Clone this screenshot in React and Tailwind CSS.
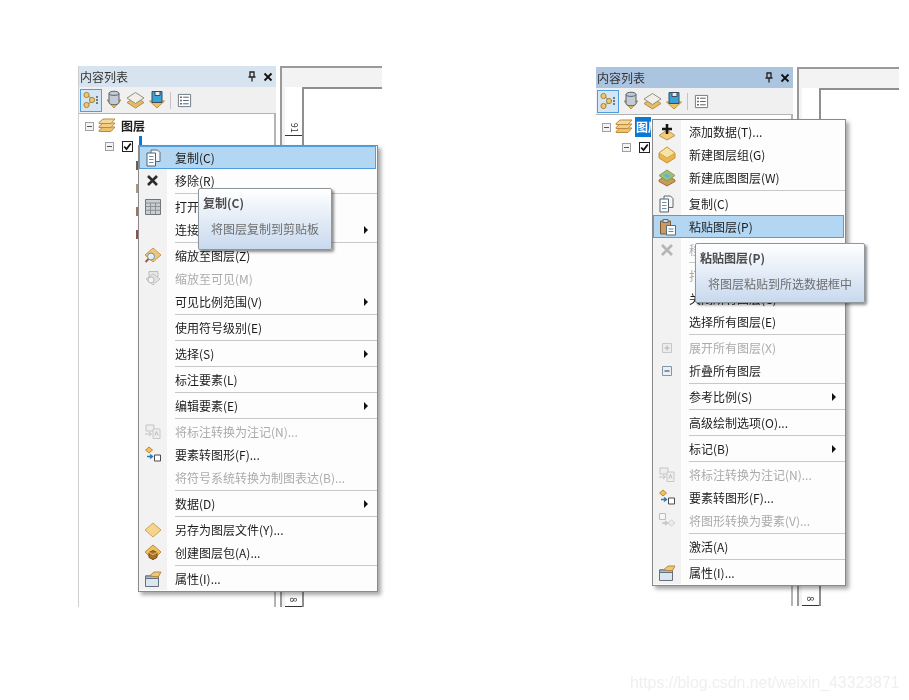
const Svg = ({ children, size = 18 }) => (
  <svg width={size} height={size} viewBox="0 0 18 18" fill="none">
    {children}
  </svg>
)

const icons = {
  copy: (
    <Svg>
      <path d="M6 1h6.500L15 3.500V12.500H6z" fill="#f4f6f8" stroke="#5f6a74" />
      <path d="M2 4h8.500V17H2z" fill="#fff" stroke="#56616b" />
      <path d="M4 7.500h4.500M4 10.500h4.500M4 13.500h4.500" stroke="#6f8da8" />
    </Svg>
  ),
  remove: (
    <Svg>
      <path d="M4 4l9 9M13 4l-9 9" stroke="#2b2b2b" strokeWidth="2.600" />
    </Svg>
  ),
  removeOff: (
    <Svg>
      <path d="M4 4l10 10M14 4l-10 10" stroke="#b5b5b5" strokeWidth="2.600" />
    </Svg>
  ),
  table: (
    <Svg>
      <path d="M1.500 1.500h15v15h-15z" fill="#c9ced3" stroke="#6d747a" />
      <path d="M1.500 5h15M6.500 5v11.500M11.500 5v11.500M1.500 8.500h15M1.500 12.300h15" stroke="#8a9095" />
    </Svg>
  ),
  zoomLayer: (
    <Svg>
      <path d="M9 1l8 7-8 7-8-7z" fill="#eec77e" stroke="#c89a45" />
      <circle cx="7" cy="9.500" r="3.500" fill="#dff0fa" stroke="#6d8ea6" />
      <path d="M4.500 12l-3 3" stroke="#b0523c" strokeWidth="2" />
    </Svg>
  ),
  zoomVisible: (
    <Svg>
      <path d="M5 1.500h9v5H5z" fill="#e6e6e6" stroke="#bdbdbd" />
      <path d="M9 4l7 5-7 6-7-6z" fill="#e2e2e2" stroke="#c4c4c4" />
      <circle cx="7" cy="10" r="3" fill="#f4f4f4" stroke="#b8b8b8" />
    </Svg>
  ),
  annotation: (
    <Svg>
      <path d="M2 2h8v6H2z" fill="#eee" stroke="#c4c4c4" />
      <path d="M1 11h6M5 9l2.500 2L5 13" stroke="#c0c0c0" />
      <path d="M9 6h7v9.500H9z" fill="#efefef" stroke="#c8c8c8" />
      <path d="M11 12.500l1.500-4 1.500 4" stroke="#bcbcbc" />
    </Svg>
  ),
  toGraphic: (
    <Svg>
      <path d="M5 1l3.500 3L5 7 1.500 4z" fill="#f0c060" stroke="#bd8a2c" />
      <path d="M3 10.500h5M6 8.500l2.500 2-2.500 2" stroke="#2f78b8" strokeWidth="1.400" />
      <path d="M10.500 9h6v6h-6z" fill="#fff" stroke="#4a4a4a" />
    </Svg>
  ),
  toFeature: (
    <Svg>
      <path d="M1.500 1.500h6v6h-6z" fill="#f6f6f6" stroke="#bdbdbd" />
      <path d="M4 11h5M7 9l2.500 2L7 13" stroke="#c4c4c4" strokeWidth="1.400" />
      <path d="M13.500 8l3.500 3-3.500 3-3.500-3z" fill="#ececec" stroke="#cfcfcf" />
    </Svg>
  ),
  diamond: (
    <Svg>
      <path d="M9 2l8 7-8 7-8-7z" fill="#f5d58e" stroke="#cfa24f" />
    </Svg>
  ),
  pack: (
    <Svg>
      <path d="M9 1l8 7-8 8-8-8z" fill="#efc25f" stroke="#c58e2c" />
      <path d="M5 8.500l4-2 4 2v5l-4 2-4-2z" fill="#a9702a" stroke="#7a4c17" />
      <path d="M5 8.500l4 2 4-2" stroke="#e9c17b" />
    </Svg>
  ),
  props: (
    <Svg>
      <path d="M1.500 6h13v10.500h-13z" fill="#dbe6f0" stroke="#63717e" />
      <path d="M1.500 6h13v2.500h-13z" fill="#a9bccd" stroke="#63717e" />
      <path d="M6 5.500l4-3.500h7l-2.500 4.500H9z" fill="#eec777" stroke="#b58a3c" />
    </Svg>
  ),
  add: (
    <Svg>
      <path d="M9 7l8 5.500L9 17l-8-4.500z" fill="#f2cc7c" stroke="#c4953f" />
      <path d="M9 1v10M4 6h10" stroke="#161616" strokeWidth="2.600" />
    </Svg>
  ),
  group: (
    <Svg>
      <path d="M9 1l8 6v5l-8 5-8-5V7z" fill="#e9b54f" stroke="#c89338" />
      <path d="M9 1l8 6-8 5-8-5z" fill="#f8e2a5" stroke="#d4a64c" />
    </Svg>
  ),
  basemap: (
    <Svg>
      <path d="M9 6l8 5v1.500L9 17l-8-4.500V11z" fill="#c79a55" stroke="#9f7434" />
      <path d="M9 1l8 5.500L9 12 1 6.500z" fill="#9cc27a" stroke="#7f9e5a" />
      <path d="M5 6.500l4-2 2 2 2-.500-3 3z" fill="#65b0d8" />
    </Svg>
  ),
  paste: (
    <Svg>
      <path d="M1.500 3h10v13h-10z" fill="#c99a63" stroke="#7c5a33" />
      <path d="M4 1.500h5v3H4z" fill="#d7dadd" stroke="#60676e" />
      <path d="M7.500 7.500h9v9.500h-9z" fill="#fff" stroke="#5c6b78" />
      <path d="M9.500 11h5M9.500 13.500h5" stroke="#4f8cc0" />
    </Svg>
  ),
  expandOff: (
    <Svg>
      <path d="M4.500 4.500h9v9h-9z" fill="#ececec" stroke="#c8c8c8" />
      <path d="M6.500 9h5M9 6.500v5" stroke="#b4b4b4" />
    </Svg>
  ),
  collapse: (
    <Svg>
      <path d="M4.500 4.500h9v9h-9z" fill="#e8eff6" stroke="#8396a8" />
      <path d="M6.500 9h5" stroke="#333" />
    </Svg>
  ),
}

const leftMenu = [
  { label: '复制(C)', icon: 'copy', active: true },
  { label: '移除(R)', icon: 'remove' },
  'sep',
  { label: '打开属性表(T)', icon: 'table' },
  { label: '连接和关联(J)', arrow: true },
  'sep',
  { label: '缩放至图层(Z)', icon: 'zoomLayer' },
  { label: '缩放至可见(M)', icon: 'zoomVisible', off: true },
  { label: '可见比例范围(V)', arrow: true },
  'sep',
  { label: '使用符号级别(E)' },
  'sep',
  { label: '选择(S)', arrow: true },
  'sep',
  { label: '标注要素(L)' },
  'sep',
  { label: '编辑要素(E)', arrow: true },
  'sep',
  { label: '将标注转换为注记(N)...', icon: 'annotation', off: true },
  { label: '要素转图形(F)...', icon: 'toGraphic' },
  { label: '将符号系统转换为制图表达(B)...', off: true },
  'sep',
  { label: '数据(D)', arrow: true },
  'sep',
  { label: '另存为图层文件(Y)...', icon: 'diamond' },
  { label: '创建图层包(A)...', icon: 'pack' },
  'sep',
  { label: '属性(I)...', icon: 'props' },
]

const rightMenu = [
  { label: '添加数据(T)...', icon: 'add' },
  { label: '新建图层组(G)', icon: 'group' },
  { label: '新建底图图层(W)', icon: 'basemap' },
  'sep',
  { label: '复制(C)', icon: 'copy' },
  { label: '粘贴图层(P)', icon: 'paste', active: true },
  { label: '移除(R)', icon: 'removeOff', off: true },
  'sep',
  { label: '打开所有图层(O)', off: true },
  { label: '关闭所有图层(C)' },
  { label: '选择所有图层(E)' },
  'sep',
  { label: '展开所有图层(X)', icon: 'expandOff', off: true },
  { label: '折叠所有图层', icon: 'collapse' },
  'sep',
  { label: '参考比例(S)', arrow: true },
  'sep',
  { label: '高级绘制选项(O)...' },
  'sep',
  { label: '标记(B)', arrow: true },
  'sep',
  { label: '将标注转换为注记(N)...', icon: 'annotation', off: true },
  { label: '要素转图形(F)...', icon: 'toGraphic' },
  { label: '将图形转换为要素(V)...', icon: 'toFeature', off: true },
  'sep',
  { label: '激活(A)' },
  'sep',
  { label: '属性(I)...', icon: 'props' },
]

function MenuItem({ item }) {
  return (
    <div className={`flex h-[23px] items-center ${item.active ? 'mr-px border border-[#4f9fe0] bg-[#b3d7f3]' : ''}`}>
      <div className={`flex h-full shrink-0 items-center justify-center ${item.active ? 'w-[27px]' : 'w-[28px] bg-[#f2f2f2]'}`}>
        {item.icon && icons[item.icon]}
      </div>
      <span className={`pl-[8px] text-[12px] whitespace-nowrap ${item.off ? 'text-[#ababab]' : 'text-[#1c1c1c]'}`}>
        {item.label}
      </span>
      {item.arrow && <span className="ml-auto mr-[9px] h-0 w-0 border-y-[4px] border-l-[4px] border-y-transparent border-l-[#111]" />}
    </div>
  )
}

function Menu({ items, className, children }) {
  return (
    <div className={`absolute border border-[#8a8a8a] bg-[#fdfdfd] pb-px shadow-[3px_3px_4px_rgba(0,0,0,0.35)] ${className}`}>
      {items.map((item, i) =>
        item === 'sep' ? (
          <div key={i} className="flex h-[3px]">
            <div className="w-[28px] bg-[#f2f2f2]" />
            <div className="ml-[8px] mt-px h-px flex-1 bg-[#c8c8c8]" />
          </div>
        ) : (
          <MenuItem key={i} item={item} />
        ),
      )}
      {children}
    </div>
  )
}

function Tip({ title, text, className }) {
  return (
    <div className={`absolute rounded-[2px] border border-[#8f969c] bg-gradient-to-b from-white to-[#c8d9ee] shadow-[2px_2px_3px_rgba(0,0,0,0.45)] ${className}`}>
      <div className="pl-[4px] pt-[5px] text-[12px] font-bold leading-[18px] text-[#4c4c4c]">{title}</div>
      <div className="pl-[12px] pt-[8px] text-[12px] leading-[18px] whitespace-nowrap text-[#6e6e6e]">{text}</div>
    </div>
  )
}

function ToolBar() {
  return (
    <div className="flex h-[26px] shrink-0 items-center bg-[#f0f0f0] pl-px">
      <div className="flex h-[23px] w-[22px] items-center justify-center border border-[#4f9fe0] bg-[#d4e6f6]">
        <svg width="18" height="18" viewBox="0 0 18 18" fill="none">
          <path d="M5 4l6 5-6 5" stroke="#777" />
          <circle cx="4.500" cy="4" r="2.600" fill="#efc66f" stroke="#a98532" />
          <circle cx="10" cy="9" r="2.600" fill="#efc66f" stroke="#a98532" />
          <circle cx="4.500" cy="14" r="2.600" fill="#efc66f" stroke="#a98532" />
          <path d="M14 6h2M14 9h2M14 12h2" stroke="#555" strokeWidth="1.400" />
        </svg>
      </div>
      <svg className="ml-[3px]" width="18" height="20" viewBox="0 0 18 20" fill="none">
        <path d="M2 10l7 8 7-8z" fill="#efbf62" stroke="#c2923c" />
        <path d="M4 3.500c0-3 10-3 10 0v9c0 3-10 3-10 0z" fill="#c3ccd5" stroke="#56616c" />
        <path d="M4 3.500c0 2.500 10 2.500 10 0" stroke="#56616c" />
      </svg>
      <svg className="ml-[3px]" width="19" height="18" viewBox="0 0 19 18" fill="none">
        <path d="M9.500 6l8.500 5.500L9.500 17 1 11.500z" fill="#e7bb66" stroke="#b99041" />
        <path d="M9.500 1.500L18 7l-8.500 5.500L1 7z" fill="#f2f0e6" stroke="#8f8f82" />
      </svg>
      <svg className="ml-[3px]" width="18" height="20" viewBox="0 0 18 20" fill="none">
        <path d="M1.500 11L9 18l7.500-7z" fill="#efbf62" stroke="#c2923c" />
        <path d="M4 1.500h10v11H4z" fill="#38a3d6" stroke="#3b4d5c" />
        <path d="M7 1.500h5v4H7z" fill="#e6edf3" stroke="#3b4d5c" />
      </svg>
      <div className="ml-[4px] h-[17px] w-px bg-[#c4c4c4]" />
      <svg className="ml-[6px]" width="15" height="15" viewBox="0 0 16 16" fill="none">
        <path d="M1.500 1.500h13v13h-13z" fill="#fff" stroke="#6b7883" />
        <path d="M6.500 4.500h6M6.500 8h6M6.500 11.500h6" stroke="#4e5a63" />
        <path d="M3.500 4.500h1.500M3.500 8h1.500M3.500 11.500h1.500" stroke="#2f2f2f" strokeWidth="1.500" />
      </svg>
    </div>
  )
}

const Box = () => (
  <span className="flex h-[9px] w-[9px] shrink-0 items-center justify-center border border-[#9aa3ab] bg-[#f3f3f3]">
    <span className="h-px w-[5px] bg-[#555]" />
  </span>
)

const Layers = () => (
  <svg width="18" height="16" viewBox="0 0 18 16" fill="none">
    <path d="M1 12.500L5 9h12l-4 4.500H1z" fill="#eec26d" stroke="#b98d3d" />
    <path d="M1 8.500L5 5h12l-4 4.500H1z" fill="#f2cd83" stroke="#b98d3d" />
    <path d="M1 4.500L5 1h12l-4 4.500H1z" fill="#f5d99c" stroke="#b98d3d" />
  </svg>
)

const Check = () => (
  <span className="flex h-[11px] w-[11px] items-center justify-center border border-[#222] bg-white">
    <svg width="9" height="9" viewBox="0 0 9 9" fill="none">
      <path d="M1.200 4.500l2.300 2.500 4.300-5.500" stroke="#111" strokeWidth="1.800" />
    </svg>
  </span>
)

// 内容列表 window; the map frame sits to its right
function Window({ className, headerBg, panelClass, selected }) {
  return (
    <div className={`absolute flex ${className}`}>
      <div className={`flex flex-col ${panelClass}`}>
        <div className={`flex h-[21px] shrink-0 items-center pl-px pr-[3px] text-[12px] text-[#333] ${headerBg}`}>
          <span>内容列表</span>
          <svg className="ml-auto" width="10" height="11" viewBox="0 0 10 11" fill="none">
            <path d="M3 1h4v5H3zM1.500 6h7M5 6v4.500" stroke="#222" strokeWidth="1.300" />
          </svg>
          <svg className="ml-[6px]" width="10" height="10" viewBox="0 0 10 10" fill="none">
            <path d="M1.500 1.500l7 7M8.500 1.500l-7 7" stroke="#111" strokeWidth="1.800" />
          </svg>
        </div>
        <ToolBar />
        <div className="min-h-0 flex-1 border-r-2 border-t border-[#b4b4b4] bg-white pl-[6px] pt-[3px]">
          <div className="flex h-[18px] items-center gap-[4px]">
            <Box />
            <Layers />
            {selected ? (
              <span className="-ml-[2px] flex h-[20px] w-[16px] shrink-0 items-center bg-[#0a78d7] pl-px text-[12px] font-bold whitespace-nowrap text-white">图层</span>
            ) : (
              <span className="ml-px text-[12px] font-bold text-[#1c1c1c]">图层</span>
            )}
          </div>
          <div className="mt-[2px] flex h-[18px] items-center pl-[20px]">
            <Box />
            <span className="ml-[8px]"><Check /></span>
            {!selected && <span className="ml-[6px] -mt-[10px] h-[10px] w-[3px] bg-[#0a78d7]" />}
          </div>
          {!selected && (
            <div className="ml-[51px] mt-[6px] flex flex-col gap-[14px]">
              <span className="h-[9px] w-[2px] bg-[#6d6156]" />
              <span className="h-[9px] w-[2px] bg-[#a89888]" />
              <span className="h-[9px] w-[2px] bg-[#a0746c]" />
              <span className="h-[9px] w-[2px] bg-[#8c5550]" />
            </div>
          )}
        </div>
      </div>
      <div className="ml-[4px] flex w-[102px] flex-col border-l-2 border-t-2 border-[#9a9a9a] bg-[#f3f3f3] pl-[3px] pt-[19px]">
        <div className="flex min-h-0 flex-1">
          <div className="flex w-[17px] flex-col justify-between bg-white pt-[33px] text-[9px] text-[#333]">
            <span className="flex h-[16px] items-center justify-center border-b border-[#333]">
              <span className="rotate-90">91</span>
            </span>
            <span className="flex h-[13px] items-center justify-center border-b border-[#333]">
              <span className="rotate-90">8</span>
            </span>
          </div>
          <div className="flex-1 border-l-2 border-t-2 border-[#8f8f8f] bg-white" />
        </div>
      </div>
    </div>
  )
}

export default function App() {
  return (
    <div className="relative h-[700px] w-[909px] overflow-hidden bg-white font-['Noto_Sans_CJK_SC','Liberation_Sans',sans-serif] blur-[0.35px]">
      <Window className="left-[78px] top-[66px] h-[541px]" headerBg="bg-[#d7e4f0]" panelClass="w-[198px] border-l border-[#cfcfcf]" />
      <Window className="left-[596px] top-[67px] h-[539px]" headerBg="bg-[#abc5e1]" panelClass="w-[197px]" selected />

      <Menu items={leftMenu} className="left-[138px] top-[145px] w-[240px]">
        <Tip title="复制(C)" text="将图层复制到剪贴板" className="left-[59px] top-[42px] h-[62px] w-[134px]" />
      </Menu>
      <Menu items={rightMenu} className="left-[652px] top-[119px] w-[194px]">
        <Tip title="粘贴图层(P)" text="将图层粘贴到所选数据框中" className="left-[42px] top-[123px] h-[60px] w-[170px]" />
      </Menu>

      <span className="absolute left-[630px] top-[671px] font-['Liberation_Sans',sans-serif] text-[15.850px] text-[#efefef]">
        https://blog.csdn.net/weixin_43323871
      </span>
    </div>
  )
}
